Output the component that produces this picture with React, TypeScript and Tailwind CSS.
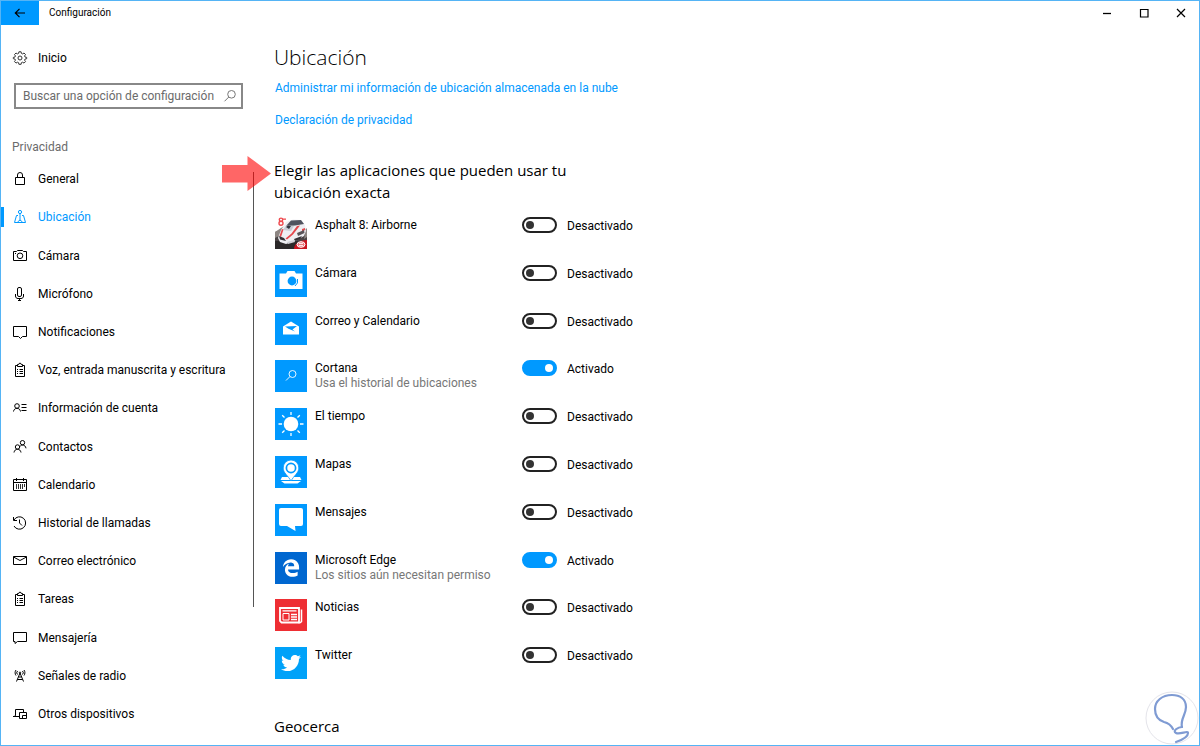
import { ReactNode, useState } from "react";
import { FaEdgeLegacy, FaTwitter } from "react-icons/fa";

interface IconProps {
  children: ReactNode;
  className?: string;
}

/* ── Line icons ─────────────────────────────────── */
function LineIcon({ children, className = "" }: IconProps) {
  return (
    <svg
      viewBox="0 0 16 16"
      className={`w-4 h-4 shrink-0 ${className}`}
      fill="none"
      stroke="currentColor"
      strokeWidth="1"
      aria-hidden="true"
    >
      {children}
    </svg>
  );
}

const clipboard = (
  <>
    <path d="M5.5 3.5h-2v11h9v-11h-2" />
    <path d="M5.5 4.5v-2h1.2a1.3 1.3 0 0 1 2.6 0h1.2v2z" />
    <path d="M5 7.5h1M7.5 7.5H11M5 9.5h1M7.5 9.5H11M5 11.5h1M7.5 11.5H11" />
  </>
);

const gear = (
  <>
    <circle cx="8" cy="8" r="2" />
    <path d="M6.9 1.8h2.2l.3 1.6 1.2.5 1.4-.9 1.5 1.5-.9 1.4.5 1.2 1.6.3v1.3l-1.6.3-.5 1.2.9 1.4-1.5 1.5-1.4-.9-1.2.5-.3 1.6H6.9l-.3-1.6-1.2-.5-1.4.9-1.5-1.5.9-1.4-.5-1.2-1.6-.3V7.4l1.6-.3.5-1.2-.9-1.4L4 3l1.4.9 1.2-.5z" />
  </>
);

const magnifier = (
  <>
    <circle cx="9.5" cy="6.3" r="3.8" />
    <path d="M6.8 9 2.5 13.3" />
  </>
);

const navItems: { label: string; icon: ReactNode }[] = [
  {
    label: "General",
    icon: (
      <>
        <path d="M3.5 6.5h9v7h-9z" />
        <path d="M5.5 6.5V4a2.500 2.500 0 0 1 5 0v2.500" />
      </>
    ),
  },
  {
    label: "Ubicación",
    icon: (
      <>
        <circle cx="8" cy="3" r="1.600" />
        <path d="M8 4.600V11M6 6.500H4.500l-2 7h11l-2-7H10M5.500 13 8 11l2.500 2" />
      </>
    ),
  },
  {
    label: "Cámara",
    icon: (
      <>
        <path d="M1.500 3.500h3l1-1h5l1 1h3v9h-13z" />
        <circle cx="8" cy="7.800" r="2.800" />
        <path d="M3 5.500h1" />
      </>
    ),
  },
  {
    label: "Micrófono",
    icon: (
      <>
        <rect x="5.500" y="1.500" width="4" height="9" rx="1.500" />
        <path d="M3.500 8v2c0 1.500 1 2.500 2.500 2.500h3c1.500 0 2.500-1 2.500-2.500V8M7.500 12.500V15M6 14.500h3" />
      </>
    ),
  },
  {
    label: "Notificaciones",
    icon: <path d="M1.500 2.500h13v10h-4l-2 2-2-2h-5z" />,
  },
  { label: "Voz, entrada manuscrita y escritura", icon: clipboard },
  {
    label: "Información de cuenta",
    icon: (
      <>
        <circle cx="5" cy="6" r="2.300" />
        <path d="M1.500 11.500c.3-2 1.700-3.200 3.500-3.200s3.200 1.200 3.500 3.200M9.500 4.500h5M9.500 7.500h5M9.500 10.500h5" />
      </>
    ),
  },
  {
    label: "Contactos",
    icon: (
      <>
        <circle cx="5.500" cy="8" r="2.200" />
        <path d="M2 13.500c.3-2 1.700-3.300 3.500-3.300s3.200 1.300 3.500 3.300" />
        <circle cx="10.500" cy="3.700" r="2.200" />
        <path d="M8.200 7.200c.6-.8 1.400-1.200 2.300-1.200 1.800 0 3.200 1.300 3.500 3.300" />
      </>
    ),
  },
  {
    label: "Calendario",
    icon: (
      <>
        <path d="M1.500 2.500h13v11h-13zM1.500 5.500h13M4.500 1v3M11.500 1v3" />
        <path d="M4.500 7v5M6.500 7v5M8.500 7v5M10.500 7v5M12.500 7v3" strokeWidth="0.800" />
      </>
    ),
  },
  {
    label: "Historial de llamadas",
    icon: <path d="M2 5a6.200 6.200 0 1 1 0 6M1.500 2v3.500H5M7.500 4.500V8l2.500 2.500" />,
  },
  {
    label: "Correo electrónico",
    icon: <path d="M1.500 3.500h13v8h-13zM1.500 4 8 7.500 14.500 4" />,
  },
  { label: "Tareas", icon: clipboard },
  {
    label: "Mensajería",
    icon: <path d="M1.500 2.500h13v9h-9l-2.500 2v-2H1.500z" />,
  },
  {
    label: "Señales de radio",
    icon: (
      <>
        <path d="M4.500 13.500 8 5l3.500 8.500M5.500 11.500h5M6.500 9h3" />
        <path d="M5.500 6.500a2.500 2.500 0 0 1 0-3.500M10.500 6.500a2.500 2.500 0 0 0 0-3.500M4 7.500C2.800 6 2.800 3.500 4 2M12 7.500c1.200-1.500 1.200-4 0-5.500" />
        <circle cx="8" cy="4.700" r=".7" />
      </>
    ),
  },
  {
    label: "Otros dispositivos",
    icon: (
      <>
        <path d="M3.500 9.500v-6h8v3M1 10.500h6M4 9.500l-2 1" />
        <path d="M7.500 6.500h7v6h-7zM10.500 12.500v-3h4" />
      </>
    ),
  },
];

/* ── App tiles ──────────────────────────────────── */
interface TileProps {
  color: string;
  children: ReactNode;
}

function Tile({ color, children }: TileProps) {
  return (
    <span className={`w-8 h-8 shrink-0 flex items-center justify-center text-white ${color}`}>
      {children}
    </span>
  );
}

function TileArt({ children }: { children: ReactNode }) {
  return (
    <svg viewBox="0 0 32 32" className="w-8 h-8" fill="currentColor" aria-hidden="true">
      {children}
    </svg>
  );
}

interface AppEntry {
  name: string;
  note?: string;
  enabled?: boolean;
  color: string;
  art: ReactNode;
}

const apps: AppEntry[] = [
  {
    name: "Asphalt 8: Airborne",
    color: "bg-white",
    art: (
      <TileArt>
        <path d="m0 15 8-3h24v20H0z" fill="#4a4446" />
        <path d="M0 24h32v8H0z" fill="#2b2829" />
        <path d="M0 15 9 9l-3 9-6 3zM31 11l1 1v8l-3 2z" fill="#8d8683" />
        <path d="m3 21 3-8 5-8 7-2.500 8 .5 4 5 1 6-2 5-9 5-9 3-6-2z" fill="#eeeef2" />
        <path d="m11 9 5-5.500L26 3l3 4-9 1.500z" fill="#50535f" />
        <path d="m8 13 3-4.500 8 .5-3 5z" fill="#c9ccd6" />
        <path d="m11 10 2-1.500 3 .5-2 3z" fill="#33363f" />
        <path d="m22 9 3-.5-7 9-6 5-1.500-1 6-5z" fill="#e5484d" />
        <path d="m7 12 1.500.5L6 20l-1.500-1zM27 12l3-1v2l-3 2z" fill="#e5484d" />
        <path d="m22 16 7-3 .5 3-6.500 3z" fill="#5a5459" />
        <path d="m4 19 5 2 2 3-6-1.500zM19 22l8-3-2 3-5 2z" fill="#343136" />
        <path d="m12 25 7-2 1 2-7 2z" fill="#d0d0d6" />
        <circle cx="6" cy="2.800" r="1.700" fill="none" stroke="#ef4b50" strokeWidth="1.400" />
        <circle cx="6" cy="6.300" r="2" fill="none" stroke="#ef4b50" strokeWidth="1.400" />
        <path d="M8 1.500h3v1.300H8z" fill="#ef4b50" />
        <path d="M19 32c0-5 5-9 13-9v9z" fill="#c9141f" />
        <ellipse cx="26" cy="27.500" rx="4" ry="2.800" fill="#ee7a7f" stroke="#fff" />
        <path d="M24 26.500h4M24 28.500h4" stroke="#fff" strokeWidth="0.800" />
      </TileArt>
    ),
  },
  {
    name: "Cámara",
    color: "bg-[#0099ff]",
    art: (
      <TileArt>
        <path d="M4.500 8.500H11L12.500 6h7L21 8.500h6.500V24h-23z" />
        <circle cx="17" cy="16" r="4.400" fill="#0099ff" />
        <path d="M20 21a6.500 6.500 0 0 0 2.500-7" fill="none" stroke="#0099ff" />
      </TileArt>
    ),
  },
  {
    name: "Correo y Calendario",
    color: "bg-[#0099ff]",
    art: (
      <TileArt>
        <path d="m8 13.500 8-5 8 5v8H8z" />
        <path d="m10 13.500 12-.5-4.500 3.500 2.500 2-6.500-2.800z" fill="#0099ff" />
      </TileArt>
    ),
  },
  {
    name: "Cortana",
    note: "Usa el historial de ubicaciones",
    enabled: true,
    color: "bg-[#0099ff]",
    art: (
      <TileArt>
        <g fill="none" stroke="currentColor" strokeWidth="0.900">
          <circle cx="17.500" cy="14" r="3.500" />
          <path d="m15 16.500-4 4" />
        </g>
      </TileArt>
    ),
  },
  {
    name: "El tiempo",
    color: "bg-[#0099ff]",
    art: (
      <TileArt>
        <circle cx="16" cy="16" r="7.300" />
        <path
          d="M16 4v3M16 25v3M3.500 16H7M25 16h3.500M7.200 7.200l2.300 2.300M22.500 22.500l2.300 2.300M7.200 24.800l2.300-2.300M22.500 9.500l2.300-2.300"
          stroke="currentColor"
          strokeWidth="1.300"
        />
      </TileArt>
    ),
  },
  {
    name: "Mapas",
    color: "bg-[#0099ff]",
    art: (
      <TileArt>
        <path d="M7 21h18l1.500 3h-21zM6 25h20l-3.500 2.500h-13z" />
        <path
          d="M16 4a7.800 7.800 0 0 0-7.800 8c0 5 4.800 7.500 7.800 13 3-5.500 7.800-8 7.800-13A7.800 7.800 0 0 0 16 4z"
          stroke="#0099ff"
          strokeWidth="0.800"
        />
        <circle cx="16" cy="12" r="4.600" fill="none" stroke="#0099ff" strokeWidth="1.700" />
      </TileArt>
    ),
  },
  {
    name: "Mensajes",
    color: "bg-[#0099ff]",
    art: (
      <TileArt>
        <path d="M6 4h20a2 2 0 0 1 2 2v14a2 2 0 0 1-2 2h-6l.5 5-8.500-5H6a2 2 0 0 1-2-2V6a2 2 0 0 1 2-2z" />
      </TileArt>
    ),
  },
  {
    name: "Microsoft Edge",
    note: "Los sitios aún necesitan permiso",
    enabled: true,
    color: "bg-[#0067d0]",
    art: <FaEdgeLegacy className="w-[18px] h-[18px]" aria-hidden="true" />,
  },
  {
    name: "Noticias",
    color: "bg-[#ee2e33]",
    art: (
      <TileArt>
        <g fill="none" stroke="currentColor">
          <path d="M5 9h19v14.500H6.500L5 22z" strokeWidth="1.800" />
          <path d="M26.500 10.500v12l-1 1H23" strokeWidth="1.500" />
          <path d="M7.500 11.800h14M16 15.500h6M16 18h6M16 20.500h6" strokeWidth="1.300" />
          <path d="M8 14.500h6V21H8z" />
        </g>
      </TileArt>
    ),
  },
  {
    name: "Twitter",
    color: "bg-[#00a2f9]",
    art: <FaTwitter className="w-5 h-5" aria-hidden="true" />,
  },
];

/* ── Toggle ─────────────────────────────────────── */
interface ToggleProps {
  name: string;
  checked: boolean;
  onChange: (checked: boolean) => void;
}

function Toggle({ name, checked, onChange }: ToggleProps) {
  return (
    <label className="flex items-start gap-2.5 leading-[18px] cursor-pointer">
      <input
        type="checkbox"
        role="switch"
        aria-label={name}
        checked={checked}
        onChange={(e) => onChange(e.target.checked)}
        className={`appearance-none w-[35px] h-4 shrink-0 rounded-full border-2 flex items-center px-0.5 cursor-pointer before:block before:w-2 before:h-2 before:rounded-full ${
          checked
            ? "justify-end bg-[#0099ff] border-[#0099ff] before:bg-white"
            : "bg-white border-[#222] before:bg-[#333]"
        }`}
      />
      <span>{checked ? "Activado" : "Desactivado"}</span>
    </label>
  );
}

/* ── Title bar ──────────────────────────────────── */
function TitleBar() {
  return (
    <header className="flex items-center h-6">
      <button
        type="button"
        aria-label="Atrás"
        className="w-[38px] h-full flex items-center justify-center bg-[#0099ff] text-black"
      >
        <LineIcon>
          <path d="M13 8H3.500M7.500 3.800 3.300 8l4.200 4.200" strokeWidth="1.200" />
        </LineIcon>
      </button>
      <span className="ml-2.5 text-[10px] leading-4">Configuración</span>
      <div className="ml-auto flex h-full">
        <button type="button" aria-label="Minimizar" className="w-[37px] flex items-center justify-center">
          <LineIcon>
            <path d="M4 8.500h8" strokeWidth="1.300" />
          </LineIcon>
        </button>
        <button type="button" aria-label="Maximizar" className="w-[37px] flex items-center justify-center">
          <LineIcon>
            <path d="M4.500 4.500H12V12H4.500z" strokeWidth="1.200" />
          </LineIcon>
        </button>
        <button type="button" aria-label="Cerrar" className="w-[37px] flex items-center justify-center">
          <LineIcon>
            <path d="m4 4 8 8M12 4l-8 8" strokeWidth="1.200" />
          </LineIcon>
        </button>
      </div>
    </header>
  );
}

/* ── Sidebar ────────────────────────────────────── */
function Sidebar() {
  const [active, setActive] = useState("Ubicación");

  return (
    <aside className="relative w-[253px] shrink-0 flex flex-col pt-[25px] pb-3">
      <a href="#inicio" className="flex items-center gap-2.5 pl-[11px] h-4">
        <LineIcon className="text-[#333]">{gear}</LineIcon>
        Inicio
      </a>

      <label className="mt-[17px] ml-[13px] mr-[11px] h-[26px] flex items-center border-2 border-[#888] pl-[7px] pr-[3px]">
        <input
          type="text"
          aria-label="Buscar una opción de configuración"
          placeholder="Buscar una opción de configuración"
          className="min-w-0 flex-1 bg-transparent outline-none placeholder:text-[#6b6b6b]"
        />
        <LineIcon className="text-[#777]">{magnifier}</LineIcon>
      </label>

      <h2 className="mt-[30px] ml-[11px] leading-4 text-[#6b6b6b]">Privacidad</h2>

      <nav className="mt-[5px] flex-1 flex flex-col">
        {navItems.map(({ label, icon }) => (
          <button
            key={label}
            type="button"
            onClick={() => setActive(label)}
            className={`flex-1 flex items-center text-left ${
              active === label ? "text-[#0099ff]" : "text-black"
            }`}
          >
            <span className={`w-[3px] h-5 mr-2 ${active === label ? "bg-[#0099ff]" : ""}`} />
            <LineIcon className="mr-2.5">{icon}</LineIcon>
            {label}
          </button>
        ))}
      </nav>

      {/* scroll thumb */}
      <div className="absolute right-0 top-[147px] bottom-[138px] w-px bg-[#555]" />
    </aside>
  );
}

/* ── Location page ──────────────────────────────── */
function LocationSettings() {
  const [enabled, setEnabled] = useState<Record<string, boolean>>(() =>
    Object.fromEntries(apps.map((app) => [app.name, Boolean(app.enabled)]))
  );

  return (
    <main className="flex-1 min-w-0 flex flex-col pl-5 pt-4 pb-2">
      <h1 className="font-['Open_Sans',sans-serif] text-[21px] leading-8 font-light">Ubicación</h1>
      <div className="mt-[7px] ml-px flex flex-col items-start gap-4 leading-4 text-[#0099ff]">
        <a href="#nube">Administrar mi información de ubicación almacenada en la nube</a>
        <a href="#privacidad">Declaración de privacidad</a>
      </div>

      <div className="relative mt-[31px]">
        <svg
          viewBox="0 0 50 36"
          className="absolute -left-[52px] -top-[3px] w-[50px] h-9"
          fill="#ff0000"
          fillOpacity="0.600"
          aria-hidden="true"
        >
          <path d="M0 9h25.500V0L49 17.500 25.500 35v-8.500H0z" />
        </svg>
        <h2 className="max-w-[320px] font-['Open_Sans',sans-serif] text-[15px] leading-[22px]">
          Elegir las aplicaciones que pueden usar tu ubicación exacta
        </h2>
      </div>

      <ul className="mt-3.5 ml-px flex-1 flex flex-col">
        {apps.map((app) => (
          <li key={app.name} className="flex-1 flex items-start">
            <div className="w-[247px] flex gap-2">
              <Tile color={app.color}>{app.art}</Tile>
              <div className="pt-px leading-[15px]">
                <p>{app.name}</p>
                {app.note && <p className="text-[#777]">{app.note}</p>}
              </div>
            </div>
            <Toggle
              name={app.name}
              checked={enabled[app.name]}
              onChange={(value) => setEnabled({ ...enabled, [app.name]: value })}
            />
          </li>
        ))}
      </ul>

      <h2 className="mt-5 font-['Open_Sans',sans-serif] text-[15px] leading-[22px]">Geocerca</h2>
    </main>
  );
}

export default function App() {
  return (
    <div className="relative min-h-screen flex flex-col border border-[#55b4f5] bg-white text-black font-['Roboto',sans-serif] text-[12px]">
      <TitleBar />
      <div className="flex-1 flex">
        <Sidebar />
        <LocationSettings />
      </div>

      <svg
        viewBox="0 0 54 54"
        className="absolute right-0 bottom-0 w-[54px] h-[54px]"
        fill="none"
        aria-hidden="true"
      >
        <circle cx="27" cy="27" r="26" fill="#fff" stroke="#e4e4ea" />
        <g stroke="#7f9bd3" strokeWidth="2.200" strokeLinecap="round">
          <path d="M37 36c-2-8 4-12 4-20C41 8 35 4 27 4 17 4 10 10 10 18c0 7 3 11 9 13 4 1 7 3 9 7" />
          <path d="M37 36c-4 0-10 4-6 6s12-3 12 0c0 4-6 7-12 9" />
        </g>
      </svg>
    </div>
  );
}
